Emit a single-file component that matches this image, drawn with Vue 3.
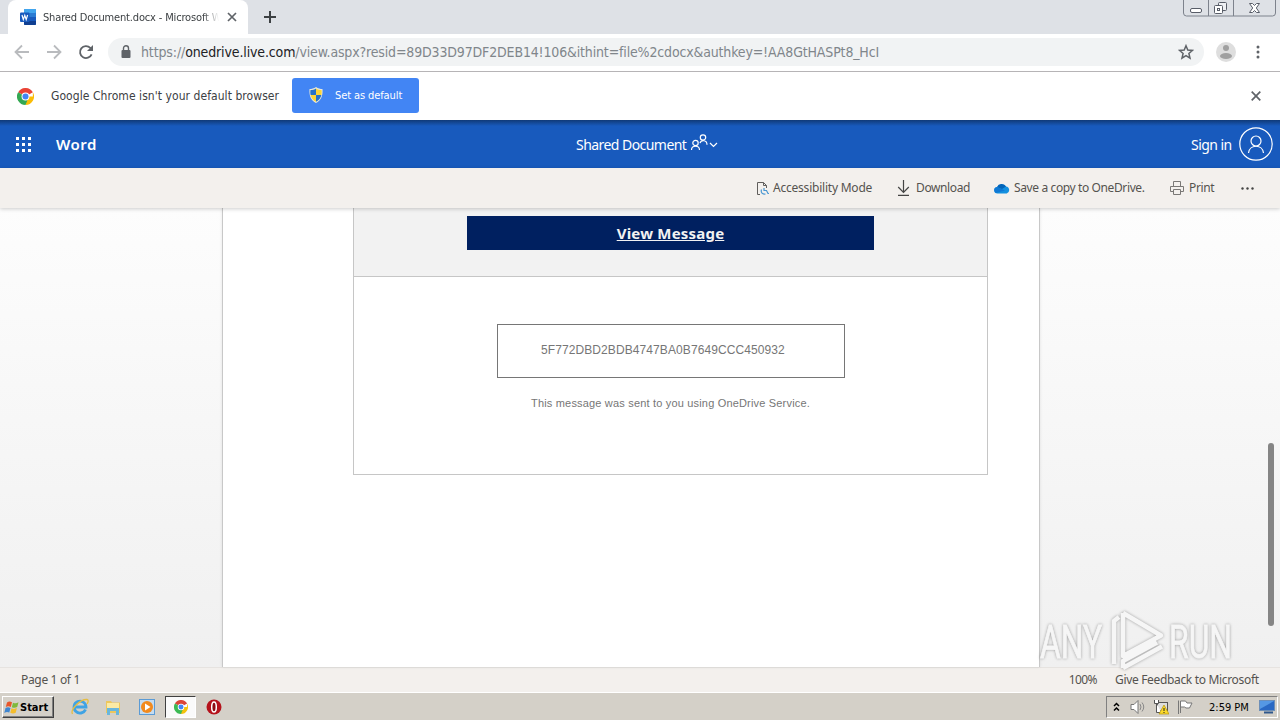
<template>
  <div class="screen">
    <div class="tabstrip">
      <div class="tab">
        <svg class="favicon" viewBox="0 0 16 16">
          <rect x="4" y="0" width="12" height="16" rx="1" fill="#2b7cd3" />
          <rect x="4" y="0" width="12" height="4" rx="1" fill="#41a5ee" />
          <rect x="4" y="8" width="12" height="4" fill="#185abd" />
          <path d="M4 12h12v3a1 1 0 0 1-1 1H5a1 1 0 0 1-1-1z" fill="#103f91" />
          <rect x="0" y="3.5" width="9.5" height="9.5" rx="1" fill="#185abd" />
          <path d="M2 6l1.3 4.6L4.8 6.3l1.4 4.3L7.6 6" fill="none" stroke="#fff" stroke-width="1.2" />
        </svg>
        <span class="tab-title">Shared Document.docx - Microsoft W</span>
        <svg class="tab-close" viewBox="0 0 10 10"><path d="M1 1l8 8M9 1l-8 8" /></svg>
      </div>
      <svg class="new-tab" viewBox="0 0 12 12"><path d="M6 0v12M0 6h12" /></svg>
      <svg class="win-buttons" viewBox="0 0 94 18">
        <path d="M.5 0v13a3 3 0 0 0 3 3h86a3 3 0 0 0 3-3V0M25.5 0v16M50.5 0v16" fill="none" stroke="#7d828c" />
        <rect x="7.5" y="8.5" width="11" height="4" rx="1.5" fill="#fff" stroke="#585d68" />
        <rect x="35.500" y="2.500" width="8" height="8" rx="1" fill="#eef0f3" stroke="#585d68" />
        <rect x="31.500" y="5.500" width="8" height="8" rx="1" fill="#fff" stroke="#585d68" />
        <rect x="34.500" y="8.500" width="2" height="2" fill="none" stroke="#585d68" />
        <path d="M66.500 3.500h3l2 2 2-2h3l-3.200 4.500 3.200 4.500h-3l-2-2-2 2h-3l3.200-4.500z" fill="#fff" stroke="#585d68" />
      </svg>
    </div>

    <div class="toolbar">
      <svg class="nav back" viewBox="0 0 16 16"><path d="M15 8H2M8 1.500L1.500 8 8 14.500" /></svg>
      <svg class="nav forward" viewBox="0 0 16 16"><path d="M1 8h13M8 1.500L14.500 8 8 14.500" /></svg>
      <svg class="nav reload" viewBox="0 0 16 16">
        <path d="M13.600 10.300A6 6 0 1 1 12.300 3.800L14 5.500" />
        <path d="M15 1v6H9z" class="solid" />
      </svg>
      <div class="omnibox">
        <svg class="lock" viewBox="0 0 10 13">
          <rect x="0.500" y="5" width="9" height="8" rx="1" fill="#5f6368" />
          <path d="M2.500 5V3.200a2.500 2.500 0 0 1 5 0V5" fill="none" stroke="#5f6368" stroke-width="1.400" />
        </svg>
        <div class="url"><span class="scheme">https://</span><span class="host">onedrive.live.com</span><span class="path">/view.aspx?resid=89D33D97DF2DEB14!106&amp;ithint=file%2cdocx&amp;authkey=!AA8GtHASPt8_HcI</span></div>
        <svg class="star" viewBox="0 0 16 16"><path d="M8 1.700l1.800 4.300 4.700.4-3.600 3.100 1.100 4.600L8 11.600l-4 2.500 1.100-4.600L1.500 6.400l4.700-.4z" /></svg>
      </div>
      <svg class="avatar" viewBox="0 0 20 20">
        <circle cx="10" cy="10" r="10" fill="#dedede" />
        <circle cx="10" cy="6" r="3" fill="#a0a0a0" />
        <ellipse cx="10" cy="14" rx="6" ry="3" fill="#a0a0a0" />
      </svg>
      <svg class="kebab" viewBox="0 0 4 14"><circle cx="2" cy="2" r="1.500" /><circle cx="2" cy="7" r="1.500" /><circle cx="2" cy="12" r="1.500" /></svg>
    </div>

    <div class="infobar">
      <svg class="chrome-logo" viewBox="0 0 18 18">
        <path d="M9 9L1.200 4.500A9 9 0 0 1 16.800 4.500z" fill="#ea4335" />
        <path d="M9 9h7.800V4.500A9 9 0 0 1 9 18z" fill="#fbbc05" />
        <path d="M9 9l2 4-2 5A9 9 0 0 1 1.200 4.500z" fill="#34a853" />
        <circle cx="9" cy="9" r="4.200" fill="#fff" />
        <circle cx="9" cy="9" r="3.200" fill="#4285f4" />
      </svg>
      <span class="info-text">Google Chrome isn't your default browser</span>
      <button class="set-default">
        <svg class="shield" viewBox="0 0 14 16">
          <path d="M7 0c2 1.500 4.500 2 6.500 2C14 9 12 13.500 7 16 2 13.500 0 9 .5 2 2.500 2 5 1.500 7 0z" fill="#e8e8d8" />
          <path d="M7 1.500V8H1.600C1.200 6 1.300 4.500 1.500 3 3.500 3 5.500 2.500 7 1.500zM7 8h5.400c-.7 3-2.400 5.300-5.400 6.800z" fill="#2672c8" />
          <path d="M7 1.500V8h5.400c.4-2 .3-3.500.1-5-2 0-4-.5-5.500-1.500zM7 8H1.600c.7 3 2.400 5.300 5.400 6.800z" fill="#fcd535" />
        </svg>
        <span>Set as default</span>
      </button>
      <svg class="info-close" viewBox="0 0 10 10"><path d="M.7.7l8.600 8.600M9.300.7L.7 9.300" /></svg>
    </div>

    <header class="word-header">
      <div class="waffle"><i v-for="n in 9" :key="n"></i></div>
      <span class="app-name">Word</span>
      <div class="doc-title">
        <span>Shared Document</span>
        <svg class="people" viewBox="0 0 28 18">
          <circle cx="5.500" cy="9" r="2.700" />
          <path d="M1.500 16c0-5 8-5 8 0" />
          <circle cx="13" cy="3.500" r="2.700" />
          <path d="M10 9.200c1-3.500 7-3.500 7 1.500" />
          <path d="M20 9l3.500 3.500L27 9" />
        </svg>
      </div>
      <span class="sign-in">Sign in</span>
      <svg class="user" viewBox="0 0 34 34">
        <circle cx="17" cy="17" r="16.200" />
        <circle cx="17" cy="14" r="5" />
        <path d="M9.500 26c1-9 14-9 15 0" />
      </svg>
    </header>

    <div class="commands">
      <button class="cmd accessibility">
        <svg viewBox="0 0 14 15" class="ic-doc">
          <path d="M4 13.500H1.500v-12h6l3 3V7M7.500 1.500v3h3" fill="none" stroke="#605e5c" />
          <path d="M8 7v3M5.500 8.500c-1 3 1 5 4 4.500M8 9.500h2.500l1.500 3h1" fill="none" stroke="#4a97d2" stroke-width="1.200" />
        </svg>
        <span>Accessibility Mode</span>
      </button>
      <button class="cmd download">
        <svg viewBox="0 0 12 16" class="ic-down"><path d="M6 0v12M.7 7L6 12.300 11.300 7M.5 15.300h11" fill="none" stroke="#444" stroke-width="1.200" /></svg>
        <span>Download</span>
      </button>
      <button class="cmd save">
        <svg viewBox="0 0 16 11" class="ic-cloud">
          <path d="M3.500 10.500a3.300 3.300 0 0 1 0-6.600A5 5 0 0 1 12 3.500a3.600 3.600 0 0 1 .7 7z" fill="#1490df" />
          <path d="M3 4a5 5 0 0 1 9-.5L8 6z" fill="#0364b8" />
          <path d="M3 4l8 3.500-9 2.500C-1 8 0 4.500 3 4z" fill="#0f78d4" />
        </svg>
        <span>Save a copy to OneDrive.</span>
      </button>
      <button class="cmd print">
        <svg viewBox="0 0 14 14" class="ic-print"><path d="M3.500 5V.5h7V5M3.500 10.500h-3v-5h13v5h-3M3.500 8.500h7v5h-7z" fill="none" stroke="#7a7876" /></svg>
        <span>Print</span>
      </button>
      <svg class="more" viewBox="0 0 13 3"><circle cx="1.500" cy="1.500" r="1.200" /><circle cx="6.500" cy="1.500" r="1.200" /><circle cx="11.500" cy="1.500" r="1.200" /></svg>
    </div>

    <main class="canvas">
      <div class="page">
        <div class="mail">
          <div class="mail-top"><a class="view-message">View Message</a></div>
          <div class="mail-bottom">
            <div class="code"><span>5F772DBD2BDB4747BA0B7649CCC450932</span></div>
            <p>This message was sent to you using OneDrive Service.</p>
          </div>
        </div>
      </div>
      <div class="scroll-thumb"></div>
    </main>

    <footer class="status">
      <span class="page-count">Page 1 of 1</span>
      <span class="zoom">100%</span>
      <span class="feedback">Give Feedback to Microsoft</span>
    </footer>

    <div class="taskbar">
      <div class="start">
        <svg viewBox="0 0 16 15">
          <path d="M3 2.500C5 1 6.500 1.500 8 2.300L6.800 7C5 6 3.500 6 1.800 7z" fill="#e8562a" />
          <path d="M9 2.700c2 .9 3.500.8 5.500-.4L13.200 7c-1.800 1-3.500 1-5.400.2z" fill="#7fb93c" />
          <path d="M1.500 8c1.800-1 3.300-.9 5 0l-1.200 4.600c-1.600-.9-3.200-.8-5 .3z" fill="#3f86d0" />
          <path d="M7.500 8.300c2 .9 3.600.8 5.400-.2l-1.200 4.700c-2 1.100-3.500 1-5.400 0z" fill="#f4bd2c" />
        </svg>
        <span>Start</span>
      </div>
      <svg class="task ie" viewBox="0 0 18 18">
        <path d="M14.500 11.500A6 6 0 1 1 15 9H4" fill="none" stroke="#3fa3e4" stroke-width="2.800" />
        <path d="M1.500 16C-1 12 9 1 16 1.500c2 .5 1 3 0 4.500" fill="none" stroke="#e6bd42" stroke-width="1.300" />
      </svg>
      <svg class="task explorer" viewBox="0 0 18 18">
        <path d="M2 3h5l1 1.500h8V15H2z" fill="#edc75c" />
        <path d="M3 5h12v8H3z" fill="#fbeaa4" />
        <path d="M3 17v-7h12v7h-3v-4H6v4z" fill="#69b6dc" />
      </svg>
      <svg class="task media" viewBox="0 0 18 18">
        <rect x="1.500" y="1.500" width="15" height="15" fill="#c5dcf0" stroke="#5b9bd5" />
        <circle cx="9" cy="9" r="6" fill="#f28a1d" />
        <path d="M7 5.500L12.500 9 7 12.500z" fill="#fff" />
      </svg>
      <div class="task-active">
        <svg viewBox="0 0 18 18">
          <path d="M9 9L1.200 4.500A9 9 0 0 1 16.800 4.500z" fill="#db4437" />
          <path d="M9 9h7.800V4.500A9 9 0 0 1 9 18z" fill="#f4c20d" />
          <path d="M9 9l2 4-2 5A9 9 0 0 1 1.200 4.500z" fill="#3cba54" />
          <circle cx="9" cy="9" r="4.200" fill="#fff" />
          <circle cx="9" cy="9" r="3.200" fill="#4285f4" />
        </svg>
      </div>
      <svg class="task opera" viewBox="0 0 16 16">
        <circle cx="8" cy="8" r="7.500" fill="#b5121b" />
        <ellipse cx="8" cy="8" rx="2.300" ry="5" fill="#8c0c12" stroke="#fff" stroke-width="1.500" />
      </svg>
      <div class="tray">
        <svg class="chevrons" viewBox="0 0 7 10"><path d="M1 4l2.500-2.500L6 4M1 8.500L3.500 6 6 8.500" /></svg>
        <svg class="speaker" viewBox="0 0 16 16">
          <path d="M1 5.500h3l4-4v13l-4-4H1z" fill="#fff" stroke="#777" />
          <path d="M10 5q2 3 0 6M12 3.500q3.500 4.500 0 9" fill="none" stroke="#888" />
        </svg>
        <svg class="network" viewBox="0 0 16 16">
          <rect x="4.500" y="3.500" width="10" height="8" fill="#ddd" stroke="#555" />
          <path d="M1.500 1v3.500h4V1M3.500 4.500v9h5" fill="#fff" stroke="#555" />
          <path d="M11 6l5 9H6z" fill="#fbd92b" stroke="#b59406" stroke-width=".7" />
          <path d="M11 9v3M11 13v1" stroke="#222" />
        </svg>
        <svg class="flag" viewBox="0 0 16 16"><path d="M1.500 15V1.500M3.500 14V2h5l1.500 2h5L12.500 9H9L7.500 8h-4" fill="#fff" stroke="#777" /></svg>
        <span class="clock">2:59 PM</span>
        <svg class="desktop" viewBox="0 0 16 14">
          <rect x=".5" y=".5" width="15" height="10" fill="#2a69c4" stroke="#6d8fb8" />
          <path d="M1 1h14L1 9z" fill="#5598e4" />
          <path d="M5 12.500h9" stroke="#30588c" stroke-width="2" />
        </svg>
      </div>
    </div>

    <svg class="watermark" viewBox="0 0 200 66">
      <g class="mark">
        <text x="3" y="50" textLength="62" lengthAdjust="spacingAndGlyphs">ANY</text>
        <path d="M82 9l-5 4v43M86 5v43l38-20.500L86 5M86 60l39-21.500M86 60v-7l34-18.500" />
        <text x="132" y="50" textLength="63" lengthAdjust="spacingAndGlyphs">RUN</text>
      </g>
    </svg>
  </div>
</template>

<script setup>
</script>

<style>
body {
  margin: 0;
  overflow: hidden;
}
</style>

<style scoped>
.screen {
  position: relative;
  width: 1280px;
  height: 720px;
  display: flex;
  flex-direction: column;
  overflow: hidden;
  background: #fff;
  font-family: "Noto Sans", sans-serif;
  white-space: nowrap;
}

svg {
  display: block;
  flex: none;
}

button {
  border: 0;
  padding: 0;
  background: none;
  font: inherit;
}

/* browser tab strip */
.tabstrip {
  flex: none;
  display: flex;
  height: 34px;
  background: #dee1e6;
}

.tab {
  display: flex;
  align-items: center;
  width: 240px;
  margin-left: 8px;
  padding: 0 11px 0 12px;
  box-sizing: border-box;
  background: #fff;
  border-radius: 8px 8px 0 0;
}

.favicon {
  width: 16px;
  height: 16px;
}

.tab-title {
  width: 180px;
  margin-left: 7px;
  font-family: "DejaVu Sans Condensed", "DejaVu Sans", sans-serif;
  font-size: 11px;
  letter-spacing: -0.16px;
  color: #3c4043;
  -webkit-mask-image: linear-gradient(90deg, #000 160px, transparent 176px);
  mask-image: linear-gradient(90deg, #000 160px, transparent 176px);
}

.tab-close {
  width: 10px;
  height: 10px;
  margin-left: 4px;
}

.tab-close path,
.info-close path {
  stroke: #5f6368;
  stroke-width: 1.7;
}

.new-tab {
  width: 12px;
  height: 12px;
  margin: 11px 0 0 16px;
}

.new-tab path {
  stroke: #3c4043;
  stroke-width: 2;
}

.win-buttons {
  width: 94px;
  height: 18px;
  margin-left: auto;
  margin-right: 3px;
}

/* address bar */
.toolbar {
  flex: none;
  display: flex;
  align-items: center;
  height: 38px;
  padding: 0 20px 2px 14px;
  box-sizing: border-box;
  border-bottom: 1px solid #b6b4b6;
}

.nav {
  width: 16px;
  height: 16px;
  margin-right: 16px;
}

.nav path {
  fill: none;
  stroke: #b9bbbe;
  stroke-width: 1.8;
}

.reload path {
  stroke: #5f6368;
}

.reload .solid {
  fill: #5f6368;
  stroke: none;
}

.omnibox {
  display: flex;
  align-items: center;
  width: 1096px;
  height: 28px;
  margin-left: -2px;
  padding: 0 10px 0 13px;
  box-sizing: border-box;
  border-radius: 14px;
  background: #f1f3f4;
}

.lock {
  width: 10px;
  height: 13px;
}

.url {
  flex: 1;
  margin-left: 10px;
  font-family: "DejaVu Sans Condensed", "DejaVu Sans", sans-serif;
  font-size: 14px;
  letter-spacing: -0.155px;
  color: #80868b;
}

.scheme,
.host {
  letter-spacing: -0.13px;
}

.host {
  color: #202124;
}

.star {
  width: 16px;
  height: 16px;
}

.star path {
  fill: none;
  stroke: #5f6368;
  stroke-width: 1.5;
}

.avatar {
  width: 20px;
  height: 20px;
  margin-left: 12px;
}

.kebab {
  width: 4px;
  height: 14px;
  margin-left: auto;
}

.kebab circle {
  fill: #5f6368;
}

/* default browser prompt */
.infobar {
  flex: none;
  display: flex;
  align-items: center;
  height: 48px;
  padding: 0 19px 0 17px;
}

.chrome-logo {
  width: 17px;
  height: 17px;
}

.info-text {
  width: 241px;
  margin-left: 17px;
  font-family: "DejaVu Sans Condensed", "DejaVu Sans", sans-serif;
  font-size: 12px;
  letter-spacing: 0.06px;
  color: #3c4043;
}

.set-default {
  display: flex;
  align-items: center;
  width: 127px;
  height: 35px;
  margin-bottom: 2px;
  padding-left: 17px;
  border-radius: 3px;
  background: #4285f4;
  color: #fff;
  font-family: "DejaVu Sans Condensed", "DejaVu Sans", sans-serif;
  font-size: 11px;
  letter-spacing: -0.1px;
}

.shield {
  width: 14px;
  height: 16px;
  margin-right: 12px;
}

.info-close {
  width: 10px;
  height: 10px;
  margin-left: auto;
}

/* Word header */
.word-header {
  flex: none;
  display: flex;
  align-items: center;
  height: 48px;
  padding: 0 7px 0 16px;
  box-sizing: border-box;
  color: #fff;
  background: linear-gradient(#103a78, #185abd 6px);
}

.waffle {
  display: grid;
  grid-template-columns: repeat(3, 3px);
  gap: 3px;
}

.waffle i {
  width: 3px;
  height: 3px;
  background: #fff;
}

.app-name {
  width: 60px;
  margin-left: 25px;
  font-size: 15px;
  font-weight: 600;
  letter-spacing: 0.5px;
}

.doc-title {
  display: flex;
  align-items: center;
  width: 615px;
  margin-left: 460px;
  font-size: 14px;
  letter-spacing: -0.55px;
}

.people {
  width: 28px;
  height: 18px;
  margin: -2px 0 0 4px;
}

.people circle,
.people path,
.user circle,
.user path {
  fill: none;
  stroke: #fff;
  stroke-width: 1.2;
}

.sign-in {
  font-size: 14px;
  letter-spacing: -0.55px;
}

.user {
  width: 34px;
  height: 34px;
  margin-left: auto;
}

/* command bar */
.commands {
  position: relative;
  z-index: 1;
  flex: none;
  display: flex;
  align-items: center;
  height: 40px;
  padding-left: 756px;
  box-sizing: border-box;
  background: #f3f0ed;
  box-shadow: 0 1px 4px rgba(0, 0, 0, 0.2);
}

.cmd {
  display: flex;
  align-items: center;
  color: #55534f;
  font-size: 12px;
  letter-spacing: -0.38px;
}

.cmd span {
  margin-bottom: 1px;
}

.accessibility {
  width: 141px;
  letter-spacing: -0.22px;
}

.download {
  width: 97px;
}

.save {
  width: 176px;
}

.print {
  width: 71px;
}

.ic-doc {
  width: 14px;
  height: 15px;
  margin-right: 3px;
}

.ic-down {
  width: 13px;
  height: 16px;
  margin-right: 6px;
}

.ic-cloud {
  width: 16px;
  height: 11px;
  margin-right: 4px;
}

.ic-print {
  width: 14px;
  height: 14px;
  margin-right: 5px;
}

.more {
  width: 13px;
  height: 3px;
}

.more circle {
  fill: #444;
}

/* document */
.canvas {
  position: relative;
  flex: none;
  height: 459px;
  background: linear-gradient(#fdfdfd, #f0f0f0);
}

.page {
  width: 816px;
  height: 459px;
  margin-left: 222px;
  background: #fff;
  border-left: 1px solid #c8c8c8;
  border-right: 1px solid #c8c8c8;
  box-shadow: 0 0 3px rgba(0, 0, 0, 0.1);
}

.mail {
  width: 633px;
  height: 266px;
  margin-left: 130px;
  border: 1px solid #c6c6c6;
  border-top: 0;
}

.mail-top {
  height: 60px;
  padding: 8px 113px 0;
  background: #f2f2f2;
  border-bottom: 1px solid #c6c6c6;
}

.view-message {
  display: block;
  height: 34px;
  background: #002060;
  color: #f2f2f2;
  font-size: 15px;
  font-weight: 700;
  letter-spacing: 0.2px;
  line-height: 34px;
  text-align: center;
  text-decoration: underline;
}

.mail-bottom {
  padding-top: 47px;
  color: #767676;
  font-family: "Liberation Sans", Arial, sans-serif;
}

.code {
  width: 346px;
  height: 52px;
  margin-left: 143px;
  border: 1px solid #767676;
  font-size: 12px;
  letter-spacing: 0.09px;
  line-height: 50px;
}

.code span {
  margin-left: 43px;
}

.mail-bottom p {
  margin: 18px 0 0 177px;
  font-size: 11px;
  letter-spacing: 0.18px;
  line-height: 14px;
}

.scroll-thumb {
  position: absolute;
  top: 235px;
  right: 6px;
  width: 6px;
  height: 183px;
  border-radius: 3px;
  background: #858585;
}

/* status bar */
.status {
  flex: none;
  display: flex;
  align-items: center;
  height: 25px;
  padding: 0 21px 1px;
  box-sizing: border-box;
  border-top: 1px solid #e6e3e0;
  background: #f3f0ed;
  color: #55534f;
  font-size: 12px;
  letter-spacing: -0.33px;
}

.zoom {
  margin-left: auto;
  letter-spacing: -0.6px;
}

.feedback {
  width: 144px;
  margin-left: 18px;
}

/* taskbar */
.taskbar {
  flex: none;
  display: flex;
  align-items: center;
  height: 28px;
  padding: 1px 2px 0 2px;
  box-sizing: border-box;
  border-top: 1px solid #fff;
  background: #d4d0c8;
}

.start {
  display: flex;
  align-items: center;
  width: 52px;
  height: 22px;
  box-sizing: border-box;
  border: 1px solid;
  border-color: #fff #404040 #404040 #fff;
  box-shadow: inset -1px -1px #808080;
  color: #000;
  font-family: "DejaVu Sans Condensed", "DejaVu Sans", sans-serif;
  font-size: 11px;
  font-weight: 700;
}

.start svg {
  width: 16px;
  height: 15px;
  margin-left: 1px;
}

.task {
  width: 18px;
  height: 18px;
}

.ie {
  margin-left: 17px;
}

.explorer {
  margin-left: 15px;
}

.media {
  margin-left: 16px;
}

.task-active {
  display: flex;
  align-items: center;
  justify-content: center;
  width: 31px;
  height: 22px;
  margin-left: 9px;
  box-sizing: border-box;
  border: 1px solid;
  border-color: #404040 #fff #fff #404040;
  background: #fafafa;
}

.task-active svg {
  width: 14px;
  height: 14px;
}

.opera {
  width: 16px;
  height: 16px;
  margin-left: 10px;
}

.tray {
  display: flex;
  align-items: center;
  width: 172px;
  height: 22px;
  margin-left: auto;
  padding: 0 2px 0 6px;
  box-sizing: border-box;
  border: 1px solid;
  border-color: #808080 #fff #fff #808080;
}

.chevrons {
  width: 7px;
  height: 10px;
}

.chevrons path {
  fill: none;
  stroke: #000;
  stroke-width: 1.5;
}

.speaker {
  width: 16px;
  height: 16px;
  margin-left: 10px;
}

.network {
  width: 16px;
  height: 16px;
  margin-left: 7px;
}

.flag {
  width: 16px;
  height: 16px;
  margin-left: 8px;
}

.clock {
  margin-left: 16px;
  color: #000;
  font-family: "DejaVu Sans Condensed", "DejaVu Sans", sans-serif;
  font-size: 11px;
}

.desktop {
  width: 16px;
  height: 14px;
  margin-left: auto;
}

/* watermark over the lower right corner */
.watermark {
  position: absolute;
  left: 1037px;
  top: 608px;
  width: 200px;
  height: 66px;
  overflow: visible;
  filter: drop-shadow(0 0 1.5px rgba(0, 0, 0, 0.35));
}

.mark text {
  fill: #f6f6f6;
  stroke: #f6f6f6;
  stroke-width: 0.8;
  font-family: Roboto, sans-serif;
  font-size: 47px;
}

.mark path {
  fill: none;
  stroke: #f6f6f6;
  stroke-width: 4.5;
  stroke-linejoin: round;
}
</style>
